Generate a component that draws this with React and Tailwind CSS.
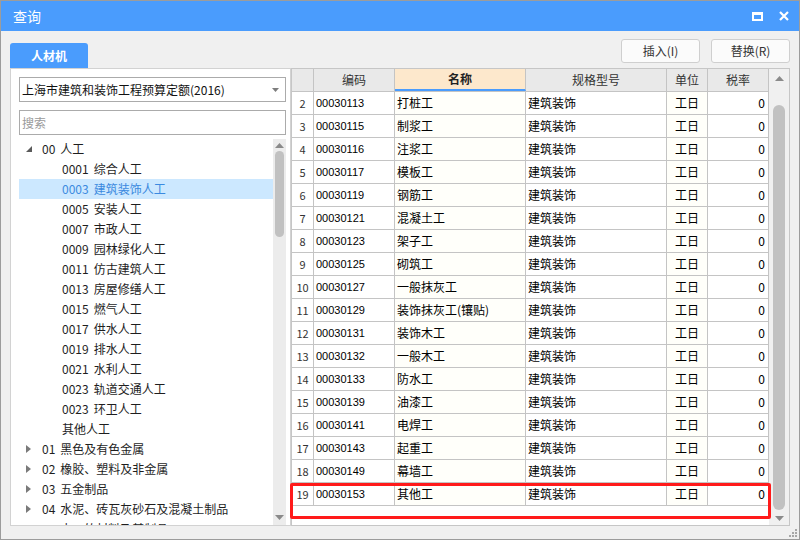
import React from "react";

const treeChildren = [
  ["0001", "综合人工"],
  ["0003", "建筑装饰人工"],
  ["0005", "安装人工"],
  ["0007", "市政人工"],
  ["0009", "园林绿化人工"],
  ["0011", "仿古建筑人工"],
  ["0013", "房屋修缮人工"],
  ["0015", "燃气人工"],
  ["0017", "供水人工"],
  ["0019", "排水人工"],
  ["0021", "水利人工"],
  ["0023", "轨道交通人工"],
  ["0023", "环卫人工"],
  ["", "其他人工"],
];

const treeGroups = [
  ["01", "黑色及有色金属"],
  ["02", "橡胶、塑料及非金属"],
  ["03", "五金制品"],
  ["04", "水泥、砖瓦灰砂石及混凝土制品"],
  ["05", "木、竹材料及其制品"],
];

const rows = [
  [2, "00030113", "打桩工"],
  [3, "00030115", "制浆工"],
  [4, "00030116", "注浆工"],
  [5, "00030117", "模板工"],
  [6, "00030119", "钢筋工"],
  [7, "00030121", "混凝土工"],
  [8, "00030123", "架子工"],
  [9, "00030125", "砌筑工"],
  [10, "00030127", "一般抹灰工"],
  [11, "00030129", "装饰抹灰工(镶贴)"],
  [12, "00030131", "装饰木工"],
  [13, "00030132", "一般木工"],
  [14, "00030133", "防水工"],
  [15, "00030139", "油漆工"],
  [16, "00030141", "电焊工"],
  [17, "00030143", "起重工"],
  [18, "00030149", "幕墙工"],
  [19, "00030153", "其他工"],
];

const font = { fontFamily: '"Noto Sans CJK SC", "Noto Sans", sans-serif' };

const ArrowUp = () => (
  <svg width="9" height="5" viewBox="0 0 9 5">
    <path d="M0 5 L4.5 0 L9 5 Z" fill="#8a8a8a" />
  </svg>
);

const ArrowDown = () => (
  <svg width="9" height="5" viewBox="0 0 9 5">
    <path d="M0 0 L4.5 5 L9 0 Z" fill="#8a8a8a" />
  </svg>
);

const TreeRow = ({ code, name, level, state, selected }) => (
  <div
    className={`h-[20px] flex items-center text-[12px] whitespace-nowrap ${
      selected ? "bg-[#cce8ff] text-[#3b8ae0]" : "text-[#1e1e1e]"
    }`}
  >
    {level === 0 ? (
      <div className="w-[23px] pl-[7px] flex items-center">
        {state === "open" ? (
          <svg width="6" height="6" viewBox="0 0 6 6">
            <path d="M6 0 L6 6 L0 6 Z" fill="#5a5a5a" />
          </svg>
        ) : (
          <svg width="5" height="8" viewBox="0 0 5 8">
            <path d="M0 0 L5 4 L0 8 Z" fill="#7a7a7a" />
          </svg>
        )}
      </div>
    ) : (
      <div className="w-[43px]" />
    )}
    {code && <span className="mr-[5px]">{code}</span>}
    <span>{name}</span>
  </div>
);

const cols = ["w-[22px]", "w-[81px]", "w-[131px]", "w-[141px]", "w-[41px]", "w-[61px]"];

export default function App() {
  return (
    <div
      className="w-[800px] h-[540px] bg-[#f0f0f0] border border-[#9c9c9c] flex flex-col relative overflow-hidden"
      style={font}
    >
      {/* title bar */}
      <div className="h-[30px] bg-[#4a9cfd] flex items-center justify-between pl-[12px] pr-[10px]">
        <span className="text-white text-[14px]">查询</span>
        <div className="flex items-center gap-[16px]">
          <div className="w-[11px] h-[9px] border-[2px] border-t-[3px] border-white" />
          <svg width="10" height="10" viewBox="0 0 10 10">
            <path d="M1 1 L9 9 M9 1 L1 9" stroke="#fff" strokeWidth="2.2" />
          </svg>
        </div>
      </div>

      <div className="flex-1 flex flex-col pl-[9px] pr-[9px]">
        {/* tab + buttons */}
        <div className="h-[37px] flex justify-between">
          <div className="self-end w-[78px] h-[25px] bg-[#4a9cfd] rounded-t-[3px] flex items-center justify-center text-white text-[12px] font-bold">
            人材机
          </div>
          <div className="flex gap-[11px] mt-[8px] h-[24px]">
            <button className="w-[79px] h-[24px] bg-[#fbfbfb] border border-[#cfcfcf] rounded-[3px] text-[12px] text-[#333]">
              插入(I)
            </button>
            <button className="w-[79px] h-[24px] bg-[#fbfbfb] border border-[#cfcfcf] rounded-[3px] text-[12px] text-[#333]">
              替换(R)
            </button>
          </div>
        </div>

        {/* main */}
        <div className="flex h-[458px]">
          {/* left panel */}
          <div className="w-[281px] h-full bg-white border border-[#d2d2d2] pl-[8px] pr-[4px] pt-[8px] flex flex-col">
            <div className="h-[25px] border border-[#ababab] flex items-center justify-between pl-[2px] pr-[6px] text-[12px] text-[#111]">
              <span>上海市建筑和装饰工程预算定额(2016)</span>
              <svg width="7" height="4" viewBox="0 0 7 4">
                <path d="M0 0 L3.5 4 L7 0 Z" fill="#7d7d7d" />
              </svg>
            </div>
            <div className="h-[25px] mt-[8px] border border-[#ababab] flex items-center pl-[2px] text-[12px] text-[#9a9a9a]">
              搜索
            </div>
            <div className="flex-1 flex mt-[4px] overflow-hidden">
              <div className="flex-1 overflow-hidden">
                <TreeRow level={0} state="open" code="00" name="人工" />
                {treeChildren.map(([c, n], i) => (
                  <TreeRow key={i} level={1} selected={i === 1} code={c} name={n} />
                ))}
                {treeGroups.map(([c, n]) => (
                  <TreeRow key={c} level={0} state="closed" code={c} name={n} />
                ))}
              </div>
              <div className="w-[13px] bg-[#ececec] flex flex-col items-center">
                <div className="h-[9px] flex items-end">
                  <ArrowUp />
                </div>
                <div className="w-[9px] h-[86px] mt-[3px] bg-[#c1c1c1] rounded-full" />
                <div className="flex-1" />
                <div className="h-[10px] flex items-start">
                  <ArrowDown />
                </div>
              </div>
            </div>
          </div>

          {/* right panel */}
          <div className="w-[499px] h-full bg-white border border-[#c6c6c6] flex relative">
            <div className="w-[477px] flex flex-col">
              <div className="h-[23px] flex border-b border-[#c4c4c4] text-[12px] text-[#333]">
                <div className={`${cols[0]} bg-[#e9e9e9] border-r border-[#c4c4c4]`} />
                <div className={`${cols[1]} bg-[#e9e9e9] border-r border-[#c4c4c4] flex items-center justify-center`}>编码</div>
                <div className={`${cols[2]} bg-[#fde8cc] border-r border-[#c4c4c4] border-b-2 border-b-[#4a9cfd] flex items-center justify-center font-bold text-[#222]`}>名称</div>
                <div className={`${cols[3]} bg-[#e9e9e9] border-r border-[#c4c4c4] flex items-center justify-center`}>规格型号</div>
                <div className={`${cols[4]} bg-[#e9e9e9] border-r border-[#c4c4c4] flex items-center justify-center`}>单位</div>
                <div className={`${cols[5]} bg-[#e9e9e9] border-r border-[#c4c4c4] flex items-center justify-center`}>税率</div>
              </div>
              {rows.map(([n, code, name]) => (
                <div key={n} className="h-[23px] flex border-b border-[#c4c4c4] text-[12px] text-black">
                  <div className={`${cols[0]} border-r border-[#c4c4c4] flex items-center justify-center text-[11px] text-[#333]`}>{n}</div>
                  <div
                    className={`${cols[1]} border-r border-[#c4c4c4] flex items-center pl-[2px] text-[11px]`}
                    style={{ fontFamily: '"Liberation Sans", sans-serif' }}
                  >
                    {code}
                  </div>
                  <div className={`${cols[2]} bg-[#fffffa] border-r border-[#c4c4c4] flex items-center pl-[2px]`}>{name}</div>
                  <div className={`${cols[3]} border-r border-[#c4c4c4] flex items-center pl-[2px]`}>建筑装饰</div>
                  <div className={`${cols[4]} bg-[#fffffa] border-r border-[#c4c4c4] flex items-center justify-center`}>工日</div>
                  <div className={`${cols[5]} border-r border-[#c4c4c4] flex items-center justify-end pr-[3px]`}>0</div>
                </div>
              ))}
            </div>
            {/* grid scrollbar */}
            <div className="w-[20px] bg-[#f0f0f0] flex flex-col items-center">
              <div className="h-[18px] flex items-center">
                <ArrowUp />
              </div>
              <div className="flex-1 flex flex-col pt-[18px] pb-[1px]">
                <div className="flex-1 w-[12px] bg-[#c1c1c1] rounded-full" />
              </div>
              <div className="h-[14px] flex items-center">
                <ArrowDown />
              </div>
            </div>
            {/* highlight box */}
            <div className="absolute left-[-2px] top-[414px] w-[481px] h-[36px] border-[3px] border-[#ff1a1a] rounded-[2px] pointer-events-none" />
          </div>
        </div>
      </div>

      {/* resize grip */}
      <div className="absolute right-[2px] bottom-[2px] grid grid-cols-3 gap-[1px]">
        {[0, 0, 1, 0, 1, 1, 1, 1, 1].map((v, i) => (
          <div key={i} className={`w-[2px] h-[2px] ${v ? "bg-[#a8a8a8]" : ""}`} />
        ))}
      </div>
    </div>
  );
}
